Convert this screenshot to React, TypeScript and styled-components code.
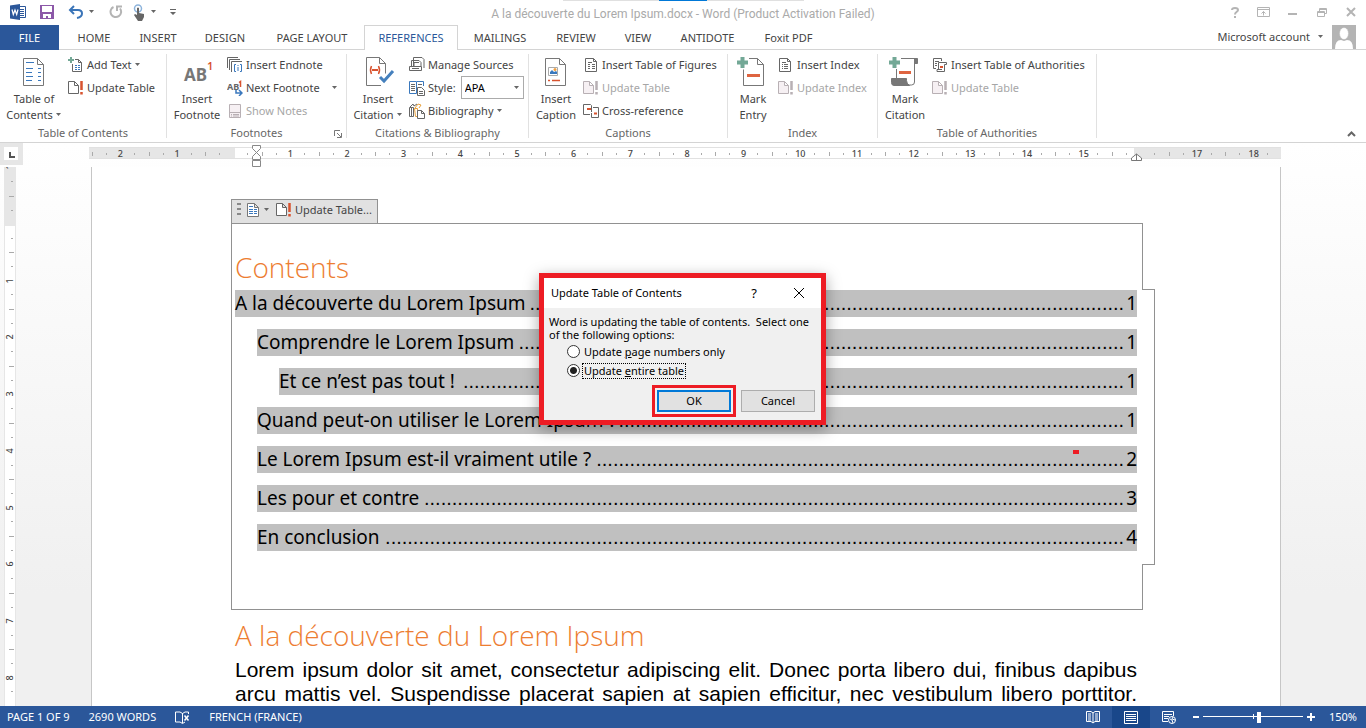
import React, { useState } from 'react';
import styled, { createGlobalStyle, css } from 'styled-components';

const blue = '#2b579a';
const ui = '"Noto Sans", "Open Sans", sans-serif';

const Global = createGlobalStyle`
  * { box-sizing: border-box; }
  body { margin: 0; background: #fff; color: #444; font: 11px/16px ${ui}; }
  button, select, input { font: inherit; color: inherit; margin: 0; }
  button { background: none; border: 0; padding: 0; cursor: pointer; }
  svg { display: block; flex: none; }
`;

const App_ = styled.div`
  height: 100vh;
  display: flex;
  flex-direction: column;
  overflow: hidden;
  position: relative;
`;

/* ---------- title bar ---------- */
const TitleBar = styled.header`
  height: 25px;
  flex: none;
  display: grid;
  grid-template-columns: 1fr auto 1fr;
  align-items: center;
  padding: 0 8px 2px;
`;
const QuickAccess = styled.div`
  display: flex;
  align-items: center;
`;
const QuickButton = styled.button<{ $w: number }>`
  width: ${(p) => p.$w}px;
  height: 20px;
  display: flex;
  align-items: center;
  justify-content: center;
`;
const DocTitle = styled.h1`
  margin: 0;
  padding-top: 4px;
  font: 12px/20px Roboto, sans-serif;
  color: #aaa;
`;
const WindowButtons = styled.div`
  display: flex;
  justify-content: flex-end;
  margin-right: -7px;
`;
const WindowButton = styled.button`
  width: 29px;
  height: 20px;
  display: flex;
  align-items: center;
  justify-content: center;
  color: #b4b4b4;
`;
const TopStrip = styled.div`
  position: absolute;
  top: 0;
  left: 50%;
  margin-left: -120px;
  width: 241px;
  height: 1px;
  background: linear-gradient(90deg, #e0e0e0 96px, #0078d7 96px 144px, #e0e0e0 144px);
`;

/* ---------- tabs ---------- */
const TabRow = styled.nav`
  height: 25px;
  flex: none;
  display: flex;
  border-bottom: 1px solid #d4d4d4;
`;
const Tab = styled.button<{ $w: number; $kind?: 'file' | 'active' }>`
  width: ${(p) => p.$w}px;
  height: 25px;
  white-space: nowrap;
  ${(p) => p.$kind === 'file' && css`background: ${blue}; color: #fff; margin-right: 3px;`}
  ${(p) =>
    p.$kind === 'active' &&
    css`
      background: #fff;
      color: ${blue};
      border: 1px solid #d4d4d4;
      border-bottom: 0;
    `}
`;
const Account = styled.button`
  margin-left: auto;
  margin-right: 10px;
  height: 24px;
  display: flex;
  align-items: center;
  gap: 8px;
`;

/* ---------- ribbon ---------- */
const Ribbon = styled.section`
  height: 93px;
  flex: none;
  display: flex;
  padding-top: 4px;
  border-bottom: 1px solid #d4d4d4;
  position: relative;
`;
const GroupBox = styled.div<{ $w: number }>`
  width: ${(p) => p.$w}px;
  height: 84px;
  flex: none;
  border-right: 1px solid #e1e1e1;
  padding-left: 4px;
  display: flex;
  flex-direction: column;
  position: relative;
`;
const GroupBody = styled.div`
  height: 71px;
  flex: none;
  display: flex;
  gap: 4px;
`;
const GroupLabel = styled.div`
  flex: none;
  text-align: center;
  padding-right: 4px;
  color: #666;
`;
const Big = styled.button<{ $w: number }>`
  width: ${(p) => p.$w}px;
  padding-top: 3px;
  display: flex;
  flex-direction: column;
  align-items: center;
  gap: 4px;
  white-space: nowrap;
`;
const Items = styled.div`
  display: flex;
  flex-direction: column;
  margin-top: -1px;
`;
const itemCss = css`
  height: 23px;
  display: flex;
  align-items: center;
  gap: 3px;
  white-space: nowrap;
`;
const Item = styled.button<{ $off?: boolean }>`
  ${itemCss}
  color: ${(p) => (p.$off ? '#a6a6a6' : '#444')};
`;
const StyleField = styled.label`
  ${itemCss}
`;
const SelectWrap = styled.span`
  margin-left: 2px;
  display: inline-grid;
  align-items: center;
  & > * { grid-area: 1 / 1; }
  & > svg { justify-self: end; margin-right: 4px; pointer-events: none; }
`;
const Select = styled.select`
  appearance: none;
  width: 63px;
  height: 23px;
  padding: 0 3px;
  border: 1px solid #ababab;
  border-radius: 0;
  background: #fff;
  color: #000;
`;
const Launcher = styled.button`
  position: absolute;
  right: 4px;
  bottom: 0;
`;
const Collapse = styled.button`
  margin-left: auto;
  align-self: flex-end;
  padding: 4px 10px 5px 4px;
`;

const Caret = ({ gap = false }: { gap?: boolean }) => (
  <svg width={gap ? 15 : 6} height="4" viewBox={gap ? '-9 0 15 4' : '0 0 6 4'}>
    <path d="M0 0h5L2.500 3z" fill="#666" />
  </svg>
);
const CaretLine = styled.span`
  display: flex;
  align-items: center;
  gap: 3px;
`;
const TwoLines = styled.span`
  display: flex;
  flex-direction: column;
  align-items: center;
  line-height: 16px;
`;

/* ---------- workspace ---------- */
const Work = styled.main`
  flex: 1;
  min-height: 0;
  display: grid;
  grid-template: 24px 1fr / 22px 1fr;
  padding-right: 16px;
  background: linear-gradient(#fff, #f0f0f0 80%);
  overflow: hidden;
`;
const Corner = styled.div`
  width: 23px;
  height: 22px;
  background: #e6e6e6;
  padding: 4px 5px 5px 4px;
  & > svg { background: #fff; }
`;
const RulerLane = styled.div`
  display: flex;
  justify-content: center;
  padding-top: 4px;
`;
const HRuler = styled.div`
  width: 1192px;
  height: 12px;
  flex: none;
  margin-left: -2px;
  padding-left: 2px;
  display: grid;
  grid-template-columns: repeat(21, 1fr);
  background: linear-gradient(90deg, #e6e6e6 146px, #fff 146px 1045px, #e6e6e6 1045px);
  border: solid #e1e1e1;
  border-width: 1px 0;
  position: relative;
`;
const Cell = styled.span`
  padding-left: 2px;
  text-align: center;
  font-size: 9px;
  font-weight: 500;
  line-height: 12px;
  color: #444;
  background:
    linear-gradient(#aaa, #aaa) 1px 4px / 1px 4px no-repeat,
    linear-gradient(#aaa, #aaa) 15px 5px / 1px 2px no-repeat,
    linear-gradient(#aaa, #aaa) 43px 5px / 1px 2px no-repeat;
`;
const IndentMark = styled.svg`
  position: absolute;
  left: 163px;
  top: -3px;
`;
const RightMark = styled.svg`
  position: absolute;
  right: 139px;
  top: 5px;
`;
const VRuler = styled.div`
  width: 12px;
  margin-left: 4px;
  overflow: hidden;
  background: linear-gradient(#e6e6e6 59px, #fff 59px);
  border: solid #e6e6e6;
  border-width: 0 1px;
`;
const VCells = styled.div`
  height: 567px;
  margin-top: -28px;
  display: grid;
  grid-template-rows: repeat(10, 1fr);
`;
const VCell = styled.span`
  display: flex;
  align-items: center;
  justify-content: center;
  font-size: 9px;
  font-weight: 500;
  color: #444;
  background:
    linear-gradient(#aaa, #aaa) 4px 0 / 5px 1px no-repeat,
    linear-gradient(#aaa, #aaa) 6px 14px / 2px 1px no-repeat,
    linear-gradient(#aaa, #aaa) 6px 42px / 2px 1px no-repeat;
  & > b { font-weight: 500; transform: rotate(-90deg); }
`;
const Canvas = styled.div`
  display: flex;
  justify-content: center;
`;
const Page = styled.article`
  width: 1190px;
  flex: none;
  padding: 32px 137px 0 139px;
  background: #fff;
  border: solid #c6c6c6;
  border-width: 0 1px;
  color: #000;
`;
const FieldBar = styled.div`
  width: 147px;
  height: 24px;
  padding: 0 5px;
  display: flex;
  align-items: center;
  background: #e1e1e1;
  border: 1px solid #919191;
  border-bottom: 0;
  color: #444;
`;
const Grip = styled.svg`
  align-self: flex-start;
  margin-top: 3px;
`;
const FieldButton = styled.button<{ $gap: number }>`
  display: flex;
  align-items: center;
  gap: ${(p) => p.$gap}px;
  white-space: nowrap;
  margin-left: 6px;
  padding-bottom: 3px;
`;
const frame = '1px solid #919191';
const TocTop = styled.div`
  display: flow-root;
  border: ${frame};
  border-bottom: 0;
  padding: 24px 3px 0;
`;
const TocMiddle = styled.div`
  position: relative;
  margin-right: -12px;
  padding: 0 17px 14px 3px;
  border: ${frame};
  border-width: 0 1px;
  display: flex;
  flex-direction: column;
  gap: 12px;
  &::before, &::after {
    content: '';
    position: absolute;
    right: -1px;
    width: 13px;
    border-top: ${frame};
  }
  &::before { top: -1px; }
  &::after { bottom: 0; }
`;
const TocBottom = styled.div`
  height: 45px;
  border: ${frame};
  border-top: 0;
`;
const Heading = styled.h2`
  margin: 0 0 4px;
  font: 350 28px/38px "Open Sans", sans-serif;
  color: #ed7d31;
`;
const TocRow = styled.a<{ $level: number }>`
  position: relative;
  height: 27px;
  margin-left: ${(p) => p.$level * 22}px;
  background: #c0c0c0;
  color: #000;
  text-decoration: none;
  font: 19px/27px "Noto Sans", sans-serif;
  display: flex;
  white-space: nowrap;
`;
const Leader = styled.span`
  margin: 0 2px 0 auto;
  font: 20px/27px "Liberation Sans", sans-serif;
`;
const RedMark = styled.i`
  position: absolute;
  top: 4px;
  right: 58px;
  width: 6px;
  height: 4px;
  background: #ed1c24;
`;
const Body = styled.section`
  padding: 6px 6px 0 4px;
`;
const Line = styled.p`
  margin: 0;
  font: 21px/24px "Liberation Sans", Arial, sans-serif;
  text-align: justify;
  text-align-last: justify;
`;

/* ---------- dialog ---------- */
const Dialog = styled.form`
  position: absolute;
  top: 273px;
  left: 50%;
  margin-left: -144px;
  width: 287px;
  border: 5px solid #ed1c24;
  background: #f0f0f0;
  color: #000;
  box-shadow: 0 4px 14px rgba(0, 0, 0, 0.35);
`;
const DialogHead = styled.div`
  height: 30px;
  padding: 0 16px 0 7px;
  display: flex;
  align-items: center;
  background: #fff;
  & > span { flex: 1; }
  & > button { width: 12px; margin-left: 33px; display: flex; justify-content: center; font-size: 13px; }
`;
const DialogBody = styled.div`
  padding: 7px 6px 8px 5px;
`;
const Message = styled.p`
  margin: 0 0 1px;
  line-height: 13px;
  white-space: pre;
`;
const Option = styled.label`
  height: 19px;
  padding-left: 18px;
  display: flex;
  align-items: center;
  gap: 2px;
`;
const Radio = styled.input`
  appearance: none;
  width: 13px;
  height: 13px;
  border: 1px solid #333;
  border-radius: 50%;
  background: #fff;
  &:checked { background: radial-gradient(circle, #222 3px, #fff 4px); }
`;
const OptionText = styled.span<{ $focus: boolean }>`
  height: 16px;
  line-height: 14px;
  padding: 0 1px;
  border: 1px dotted ${(p) => (p.$focus ? '#000' : 'transparent')};
`;
const Actions = styled.div`
  display: flex;
  justify-content: flex-end;
  gap: 10px;
  margin-top: 10px;
`;
const ActionButton = styled.button<{ $primary?: boolean }>`
  width: 74px;
  height: 22px;
  background: #e1e1e1;
  border: 1px solid #adadad;
  ${(p) =>
    p.$primary &&
    css`
      border: 2px solid #0078d7;
      outline: 3px solid #ed1c24;
      outline-offset: 2px;
    `}
`;

/* ---------- status bar ---------- */
const StatusBar = styled.footer`
  height: 22px;
  flex: none;
  display: flex;
  align-items: center;
  padding: 0 9px 0 7px;
  gap: 19px;
  background: ${blue};
  color: #fff;
`;
const StatusRight = styled.div`
  margin-left: auto;
  display: flex;
  align-items: center;
`;
const Views = styled.div`
  display: flex;
  margin-right: 3px;
`;
const ViewButton = styled.button<{ $on?: boolean }>`
  width: 38px;
  height: 22px;
  display: flex;
  align-items: center;
  justify-content: center;
  background: ${(p) => (p.$on ? '#19478a' : 'none')};
`;
const ZoomStep = styled.button`
  width: 8px;
  height: 16px;
  display: flex;
  align-items: center;
  justify-content: flex-end;
`;
const ZoomSlider = styled.input`
  appearance: none;
  width: 100px;
  height: 12px;
  margin: 0 4px;
  background:
    linear-gradient(#fff, #fff) 0 5px / 100% 1px no-repeat,
    linear-gradient(#fff, #fff) 50px 3px / 1px 5px no-repeat;
  &::-webkit-slider-thumb { appearance: none; width: 4px; height: 11px; background: #fff; }
`;
const ZoomValue = styled.span`
  width: 42px;
  text-align: right;
`;

/* ---------- icons ---------- */
const Big32 = ({ children }: { children: React.ReactNode }) => (
  <svg width="34" height="30" viewBox="0 0 34 30" fill="none" stroke="#777">{children}</svg>
);
const Small = ({ children, off }: { children: React.ReactNode; off?: boolean }) => (
  <svg width="16" height="16" viewBox="0 0 16 16" fill="none" stroke={off ? '#b8b0b4' : '#666'}>{children}</svg>
);
const bigDoc = 'M6.500 1.500h14l6 6v21h-20zM20.500 1.500v6h6';

const TocIcon = () => (
  <Big32>
    <path d={bigDoc} />
    <path stroke="#3a78bd" d="M9 5.500h8M9 11.500h7M9 15.500h6M9 19.500h7M9 23.500h6M21 11.500h3M21 15.500h3M21 19.500h3M21 23.500h3" />
  </Big32>
);
const FootnoteIcon = () => (
  <svg width="34" height="30" viewBox="0 0 34 30">
    <text x="4" y="24" fontFamily="Noto Sans" fontWeight="700" fontSize="17" fill="#777">AB</text>
    <text x="27" y="13" fontFamily="Noto Sans" fontWeight="600" fontSize="11" fill="#d8532f">1</text>
  </svg>
);
const CitationIcon = () => (
  <Big32>
    <path d="M20 28.500H5.500v-28h13l6 6v10M18.500 .5v6h6" />
    <path stroke="#d8532f" strokeWidth="1.500" d="M10.500 9q-2 4 0 8M17.500 9q2 4 0 8" />
    <path stroke="#d8532f" strokeWidth="2" d="M11 13h6" />
    <path stroke="#4580bd" strokeWidth="3" d="M19 20l4 4 9-10" />
  </Big32>
);
const CaptionIcon = () => (
  <Big32>
    <path d={bigDoc} />
    <path stroke="#aaa" d="M9.500 10.500h9v8h-9z" />
    <path fill="#3a78bd" stroke="none" d="M11 17v-2l2-2 2 2 2-1 1 1v2z" />
    <circle cx="16" cy="12.500" r="1.500" fill="#f0a040" stroke="none" />
    <path stroke="#d8532f" strokeWidth="1.500" d="M9 23.500h2M13 23.500h8" />
  </Big32>
);
const plus = 'M0 5.500h11M5.500 0v11';
const MarkEntryIcon = () => (
  <Big32>
    <path d="M7.500 12.500v16h20v-21l-6-6H13M21.500 1.500v6h6" />
    <path stroke="#73a896" strokeWidth="4" d={plus} transform="translate(1)" />
    <path stroke="#de6440" strokeWidth="3" d="M11 18.500h13" />
  </Big32>
);
const MarkCitationIcon = () => (
  <Big32>
    <path d="M8.500 12v10M13 1.500h15.500M26.500 2v23q0 3-3 3H8" />
    <path fill="#777" d="M3.500 21.500h15v2q0 3 3 5H6q-2.500 0-2.500-3zM26.500 1.500h3v5h-3z" />
    <path stroke="#73a896" strokeWidth="4" d={plus} transform="translate(1)" />
    <path stroke="#de6440" strokeWidth="3" d="M11 15.500h12" />
  </Big32>
);

const AddTextIcon = () => (
  <Small>
    <path d="M4.500 7v7.500h9v-9l-3-3H7M10.500 2.500v3h3" />
    <path stroke="#73a896" strokeWidth="2" d="M0 3h6M3 0v6" />
    <path stroke="#3a78bd" d="M7 8.500h2M10 8.500h2M7 10.500h2M10 10.500h2M7 12.500h2M10 12.500h2" />
  </Small>
);
const UpdateIcon = ({ off }: { off?: boolean }) => (
  <Small off={off}>
    <path fill={off ? '#f6f0f3' : '#fff'} d="M.5 1.500h6l4 4v8H.5zM6.500 1.500v4h4" />
    <path stroke={off ? '#b8b0b4' : '#d8532f'} strokeWidth="2.500" d="M13.500 1v9M13.500 12v2.500" />
  </Small>
);
const EndnoteIcon = () => (
  <Small>
    <path d="M.5 11V.5H11M2.500 13V2.500H13M4.500 15V4.500H15" />
    <path stroke="#3a78bd" d="M9 7.500H7.500v7H9M13 7.500h1.500v7H13M11 10v4M11 8v1" />
  </Small>
);
const NextFootnoteIcon = () => (
  <svg width="16" height="16" viewBox="0 0 16 16">
    <text x="0" y="10" fontFamily="Noto Sans" fontWeight="700" fontSize="9" fill="#666">AB</text>
    <path d="M12 2.500l1.500-1V7" fill="none" stroke="#d8532f" strokeWidth="1.500" />
    <path d="M9 10v3h5M12 10l3 3-3 3" fill="none" stroke="#3a78bd" strokeWidth="1.500" />
  </svg>
);
const ShowNotesIcon = () => (
  <Small off>
    <path fill="#f6f0f3" d="M2.500 1.500h11v13h-11z" />
    <path d="M2 9.500h12M4 11.500h1M6 11.500h6M4 13h1M6 13h6" />
  </Small>
);
const ManageIcon = () => (
  <Small>
    <path fill="#fff" d="M4.500 9V.5H13l2 2V11M2.500 9V3.500H10l2 2V9" />
    <path d="M5 9.500v-4h5M.5 9.500h12v4H.5zM3 11.500h7" />
  </Small>
);
const StyleIcon = () => (
  <Small>
    <path stroke="#3a78bd" d="M.5 1.500h7v12h-7zM8 1.500h6.500V6" />
    <path d="M2 4.500h4M2 6.500h4M2 8.500h4M2 10.500h4M9 4.500h4" />
    <path fill="#fff" d="M8.500 7.500h4l3 3v5h-7zM10 11.500h4M10 13.500h4" />
  </Small>
);
const BiblioIcon = () => (
  <Small>
    <path d="M.5 4.500h2v9h-2zM2.500 4.500h2v9h-2zM1 4l3-3 1 2 3-2" />
    <path stroke="#e9a13b" d="M5.500 5.500h3v8h-2zM6 5l3-4 3 1-2 3" />
    <path fill="#fff" d="M8.500 7.500h4l3 3v5h-7zM12.500 7.500v3h3" />
  </Small>
);
const FiguresIcon = () => (
  <Small>
    <path d="M2.500 1.500h8l3 3v10h-11zM10.500 1.500v3h3M5 5.500h4M5 7.500h2M5 9.500h2M5 11.500h2M9 7.500h3M9 9.500h3M9 11.500h3" />
  </Small>
);
const CrossRefIcon = () => (
  <Small>
    <path d="M7 11.500H.5V1.500h7l1 1V9M10 4.500h5.500v10h-7V10" />
    <path stroke="#d8532f" strokeWidth="2" d="M4 6h4M11 10.500h3" />
  </Small>
);
const IndexIcon = () => (
  <Small>
    <path d="M1.500 1.500h8l3 3v10h-11zM9.500 1.500v3h3M4 5.500h4M4 7.500h1M4 9.500h1M4 11.500h1M6 7.500h4M6 9.500h4M6 11.500h4" />
  </Small>
);
const AuthoritiesIcon = () => (
  <Small>
    <path d="M4 11.500H1.500V1.500h8V4M3 4.500h4M3 6.500h2M3 8.500h2" />
    <path fill="#fff" d="M6.500 13V5.500h8v2h-2v7H5v-2h5" />
    <path stroke="#d8532f" strokeWidth="2" d="M8 10h3" />
  </Small>
);

type Ent = { label: string; icon: React.ReactNode; off?: boolean; caret?: 'near' | 'far' };
const Entries = ({ list }: { list: Ent[] }) => (
  <>
    {list.map((e) => (
      <Item key={e.label} $off={e.off}>
        {e.icon}
        <CaretLine>
          {e.label}
          {e.caret && <Caret gap={e.caret === 'far'} />}
        </CaretLine>
      </Item>
    ))}
  </>
);
const BigButton = ({ w, icon, lines, caret }: { w: number; icon: React.ReactNode; lines: [string, string]; caret?: boolean }) => (
  <Big $w={w}>
    {icon}
    <TwoLines>
      <span>{lines[0]}</span>
      <CaretLine>
        {lines[1]}
        {caret && <Caret />}
      </CaretLine>
    </TwoLines>
  </Big>
);

const tabs: [string, number, ('file' | 'active')?][] = [
  ['FILE', 59, 'file'], ['HOME', 64], ['INSERT', 64], ['DESIGN', 70], ['PAGE LAYOUT', 104],
  ['REFERENCES', 94, 'active'], ['MAILINGS', 84], ['REVIEW', 68], ['VIEW', 56], ['ANTIDOTE', 83], ['Foxit PDF', 79],
];
const hNums = ['2', '1', '', ...Array.from({ length: 15 }, (_, i) => String(i + 1)), '', '17', '18'];
const vNums = ['1', '', '1', '2', '3', '4', '5', '6', '7', '8'];
const toc: { text: string; page: number; level: number; dots: number }[] = [
  { text: 'A la découverte du Lorem Ipsum', page: 1, level: 0, dots: 107 },
  { text: 'Comprendre le Lorem Ipsum', page: 1, level: 1, dots: 109 },
  { text: 'Et ce n’est pas tout !', page: 1, level: 2, dots: 119 },
  { text: 'Quand peut-on utiliser le Lorem Ipsum ?', page: 1, level: 1, dots: 91 },
  { text: 'Le Lorem Ipsum est-il vraiment utile ?', page: 2, level: 1, dots: 95 },
  { text: 'Les pour et contre', page: 3, level: 1, dots: 126 },
  { text: 'En conclusion', page: 4, level: 1, dots: 133 },
];

export default function App() {
  const [choice, setChoice] = useState('table');
  return (
    <App_>
      <Global />
      <TopStrip />
      <TitleBar>
        <QuickAccess>
          <QuickButton $w={20} aria-label="Word">
            <svg width="16" height="16" viewBox="0 0 16 16">
              <path d="M9 2.500h6.500v11H9" fill="#fff" stroke={blue} />
              <path d="M10 5.500h4M10 7.500h4M10 9.500h4M10 11.500h4" stroke={blue} />
              <path d="M0 1.500L10 0v16L0 14.500z" fill={blue} />
              <path d="M2 5.500l1.300 5L5 6l1.700 4.500L8 5.500" fill="none" stroke="#fff" strokeWidth="1.200" />
            </svg>
          </QuickButton>
          <QuickButton $w={38} aria-label="Save">
            <svg width="14" height="14" viewBox="0 0 14 14">
              <path d="M0 0h14v14H0z" fill="#8c58a8" />
              <path d="M2 1h10v6H2zM3 9h8v4H8v-2H6v2H3z" fill="#fff" />
            </svg>
          </QuickButton>
          <QuickButton $w={20} aria-label="Undo">
            <svg width="16" height="14" viewBox="0 0 16 14" fill="none" stroke="#3a74b8" strokeWidth="2">
              <path d="M6 1L2 5l4 4M2.500 5H10q4 0 4 3.500T9 13" />
            </svg>
          </QuickButton>
          <QuickButton $w={12} aria-label="Undo list"><Caret /></QuickButton>
          <QuickButton $w={36} aria-label="Repeat">
            <svg width="14" height="14" viewBox="0 0 14 14" fill="none" stroke="#b4b4b4" strokeWidth="2">
              <path d="M4.500 2A5.300 5.300 0 1 0 11 3.500M8 6V1.500h5" />
            </svg>
          </QuickButton>
          <QuickButton $w={10} aria-label="Touch mode">
            <svg width="12" height="17" viewBox="0 0 12 17">
              <circle cx="5" cy="4.500" r="3.500" fill="none" stroke="#8db4dc" strokeWidth="1.500" />
              <path d="M4 4q1-1 2 0v5l5 1v3l-2 4H5L1 11l1-1 2 1z" fill="#666" />
            </svg>
          </QuickButton>
          <QuickButton $w={20} aria-label="Touch mode list"><Caret /></QuickButton>
          <QuickButton $w={18} aria-label="Customize">
            <svg width="6" height="7" viewBox="0 0 6 7"><path d="M0 0h6v1H0zM0 3h6L3 6z" fill="#666" /></svg>
          </QuickButton>
        </QuickAccess>
        <DocTitle>A la découverte du Lorem Ipsum.docx - Word (Product Activation Failed)</DocTitle>
        <WindowButtons>
          <WindowButton aria-label="Help">
            <svg width="8" height="11" viewBox="0 0 8 11" fill="none" stroke="currentColor" strokeWidth="2">
              <path d="M1 3q0-2 3-2t3 2q0 1-1.500 2T4 7.500M4 9v2" />
            </svg>
          </WindowButton>
          <WindowButton aria-label="Ribbon display options">
            <svg width="13" height="10" viewBox="0 0 13 10" fill="none" stroke="currentColor">
              <path d="M.5 .5h12v9H.5zM.5 2.500h12M6.500 8.500v-4M4.500 6.500l2-2 2 2" />
            </svg>
          </WindowButton>
          <WindowButton aria-label="Minimize">
            <svg width="9" height="6" viewBox="0 0 9 6"><path d="M0 4h9v2H0z" fill="currentColor" /></svg>
          </WindowButton>
          <WindowButton aria-label="Restore">
            <svg width="10" height="9" viewBox="0 0 10 9" fill="none" stroke="currentColor">
              <path d="M.5 3.500h7v5h-7zM.5 4.500h7M2.500 3V.5h7v5H8M2.500 1.500h7" />
            </svg>
          </WindowButton>
          <WindowButton aria-label="Close">
            <svg width="10" height="10" viewBox="0 0 10 10" stroke="currentColor" strokeWidth="2"><path d="M1 1l8 8M9 1L1 9" /></svg>
          </WindowButton>
        </WindowButtons>
      </TitleBar>

      <TabRow>
        {tabs.map(([name, w, kind]) => <Tab key={name} $w={w} $kind={kind}>{name}</Tab>)}
        <Account>
          Microsoft account <Caret />
          <svg width="24" height="24" viewBox="0 0 24 24">
            <path d="M0 0h24v24H0z" fill="#b4b4b4" />
            <path d="M3 24q0-9 6-9l3 1 3-1q6 0 6 9z" fill="#fff" />
            <ellipse cx="12" cy="8.500" rx="4.500" ry="6" fill="#fff" stroke="#b4b4b4" strokeWidth=".5" />
          </svg>
        </Account>
      </TabRow>

      <Ribbon>
        <GroupBox $w={167}>
          <GroupBody>
            <BigButton w={60} icon={<TocIcon />} lines={['Table of', 'Contents']} caret />
            <Items><Entries list={[
              { label: 'Add Text', icon: <AddTextIcon />, caret: 'near' },
              { label: 'Update Table', icon: <UpdateIcon /> },
            ]} /></Items>
          </GroupBody>
          <GroupLabel>Table of Contents</GroupLabel>
        </GroupBox>
        <GroupBox $w={180}>
          <GroupBody>
            <BigButton w={52} icon={<FootnoteIcon />} lines={['Insert', 'Footnote']} />
            <Items><Entries list={[
              { label: 'Insert Endnote', icon: <EndnoteIcon /> },
              { label: 'Next Footnote', icon: <NextFootnoteIcon />, caret: 'far' },
              { label: 'Show Notes', icon: <ShowNotesIcon />, off: true },
            ]} /></Items>
          </GroupBody>
          <GroupLabel>Footnotes</GroupLabel>
          <Launcher aria-label="Footnote options">
            <svg width="8" height="8" viewBox="0 0 8 8" fill="none" stroke="#777"><path d="M.5 6V.5H6M3 3l4 4M7.500 3v4.500H3" /></svg>
          </Launcher>
        </GroupBox>
        <GroupBox $w={182}>
          <GroupBody>
            <BigButton w={54} icon={<CitationIcon />} lines={['Insert', 'Citation']} caret />
            <Items>
              <Entries list={[{ label: 'Manage Sources', icon: <ManageIcon /> }]} />
              <StyleField>
                <StyleIcon />
                Style:
                <SelectWrap>
                  <Select defaultValue="APA"><option>APA</option></Select>
                  <Caret />
                </SelectWrap>
              </StyleField>
              <Entries list={[{ label: 'Bibliography', icon: <BiblioIcon />, caret: 'near' }]} />
            </Items>
          </GroupBody>
          <GroupLabel>Citations &amp; Bibliography</GroupLabel>
        </GroupBox>
        <GroupBox $w={199}>
          <GroupBody>
            <BigButton w={46} icon={<CaptionIcon />} lines={['Insert', 'Caption']} />
            <Items><Entries list={[
              { label: 'Insert Table of Figures', icon: <FiguresIcon /> },
              { label: 'Update Table', icon: <UpdateIcon off />, off: true },
              { label: 'Cross-reference', icon: <CrossRefIcon /> },
            ]} /></Items>
          </GroupBody>
          <GroupLabel>Captions</GroupLabel>
        </GroupBox>
        <GroupBox $w={150}>
          <GroupBody>
            <BigButton w={42} icon={<MarkEntryIcon />} lines={['Mark', 'Entry']} />
            <Items><Entries list={[
              { label: 'Insert Index', icon: <IndexIcon /> },
              { label: 'Update Index', icon: <UpdateIcon off />, off: true },
            ]} /></Items>
          </GroupBody>
          <GroupLabel>Index</GroupLabel>
        </GroupBox>
        <GroupBox $w={219}>
          <GroupBody>
            <BigButton w={46} icon={<MarkCitationIcon />} lines={['Mark', 'Citation']} />
            <Items><Entries list={[
              { label: 'Insert Table of Authorities', icon: <AuthoritiesIcon /> },
              { label: 'Update Table', icon: <UpdateIcon off />, off: true },
            ]} /></Items>
          </GroupBody>
          <GroupLabel>Table of Authorities</GroupLabel>
        </GroupBox>
        <Collapse aria-label="Collapse ribbon">
          <svg width="9" height="6" viewBox="0 0 9 6" fill="none" stroke="#666" strokeWidth="2"><path d="M1 5l3.500-3.500L8 5" /></svg>
        </Collapse>
      </Ribbon>

      <Work>
        <Corner>
          <svg width="14" height="13" viewBox="0 0 14 13"><path d="M6 5v5h5" fill="none" stroke="#555" strokeWidth="2" /></svg>
        </Corner>
        <RulerLane>
          <HRuler>
            {hNums.map((n, i) => <Cell key={i}>{n}</Cell>)}
            <IndentMark width="9" height="23" viewBox="0 0 9 23" fill="#fff" stroke="#888">
              <path d="M.5 .5h8v3l-8 8v3h8v-3l-8-8zM.5 15.500h8v6h-8z" />
            </IndentMark>
            <RightMark width="11" height="8" viewBox="0 0 11 8" fill="#fff" stroke="#777">
              <path d="M5.500 1l5 4v2.500H.5V5zM5.500 1v6" />
            </RightMark>
          </HRuler>
        </RulerLane>
        <VRuler>
          <VCells>{vNums.map((n, i) => <VCell key={i}><b>{n}</b></VCell>)}</VCells>
        </VRuler>
        <Canvas>
          <Page>
            <FieldBar>
              <Grip width="4" height="12" viewBox="0 0 4 12"><path d="M0 0h4v2H0zM0 5h4v2H0zM0 10h4v2H0z" fill="#888" /></Grip>
              <FieldButton $gap={5} aria-label="Table of contents">
                <svg width="12" height="14" viewBox="0 0 12 14" fill="#fff" stroke="#777">
                  <path d="M.5 .5h7l4 4v9H.5zM7.500 .5v4h4" />
                  <path stroke="#3a78bd" d="M2 3.500h4M2 6.500h4M2 8.500h4M2 10.500h4M7 6.500h3M7 8.500h3M7 10.500h3" />
                </svg>
                <Caret />
              </FieldButton>
              <FieldButton $gap={3}><UpdateIcon /> Update Table...</FieldButton>
            </FieldBar>
            <TocTop><Heading>Contents</Heading></TocTop>
            <TocMiddle>
              {toc.map((t) => (
                <TocRow key={t.text} href="#body" $level={t.level}>
                  {t.text}
                  <Leader>{'.'.repeat(t.dots)}</Leader>
                  {t.page}
                  {t.page === 2 && <RedMark />}
                </TocRow>
              ))}
            </TocMiddle>
            <TocBottom />
            <Body id="body">
              <Heading>A la découverte du Lorem Ipsum</Heading>
              <Line>Lorem ipsum dolor sit amet, consectetur adipiscing elit. Donec porta libero dui, finibus dapibus</Line>
              <Line>arcu mattis vel. Suspendisse placerat sapien at sapien efficitur, nec vestibulum libero porttitor.</Line>
            </Body>
          </Page>
        </Canvas>
      </Work>

      <StatusBar>
        <span>PAGE 1 OF 9</span>
        <span>2690 WORDS</span>
        <svg width="15" height="13" viewBox="0 0 15 13" fill="none" stroke="#fff">
          <path d="M7.500 2.500L5 1H.5v10H5l2.500 1.500L10 11M7.500 2v10M7.500 2.500L10 1h3.500v2" />
          <path strokeWidth="1.500" d="M9.500 4.500l4 5M13.500 4.500l-4 5" />
        </svg>
        <span>FRENCH (FRANCE)</span>
        <StatusRight>
          <Views>
            <ViewButton aria-label="Read mode">
              <svg width="14" height="13" viewBox="0 0 14 13" fill="none" stroke="#fff">
                <path d="M7 2L5 .5H.5v10H5L7 12l2-1.500h4.500V.5H9zM7 2v10M2 3h3M2 5h3M2 7h3M2 9h3M9 3h3M9 5h3M9 7h3M9 9h3" />
              </svg>
            </ViewButton>
            <ViewButton $on aria-label="Print layout">
              <svg width="14" height="13" viewBox="0 0 14 13" fill="none" stroke="#fff">
                <path d="M.5 .5h13v12H.5zM2 3.500h10M2 5.500h10M2 7.500h10M2 9.500h10" />
              </svg>
            </ViewButton>
            <ViewButton aria-label="Web layout">
              <svg width="14" height="13" viewBox="0 0 14 13" fill="none" stroke="#fff">
                <path d="M6 10.500H.5V.5h11V5M2 3.500h8M2 5.500h5M2 7.500h4" />
                <circle cx="10" cy="9" r="3.500" /><path d="M8 8l2 1 1 3M11 6l-1 2 3 1" />
              </svg>
            </ViewButton>
          </Views>
          <ZoomStep aria-label="Zoom out">
            <svg width="6" height="2"><path d="M0 0h6v2H0z" fill="#fff" /></svg>
          </ZoomStep>
          <ZoomSlider type="range" min="0" max="100" defaultValue="56" aria-label="Zoom" />
          <ZoomStep aria-label="Zoom in">
            <svg width="8" height="8" viewBox="0 0 8 8"><path d="M0 3h8v2H0zM3 0h2v8H3z" fill="#fff" /></svg>
          </ZoomStep>
          <ZoomValue>150%</ZoomValue>
        </StatusRight>
      </StatusBar>

      <Dialog onSubmit={(e) => e.preventDefault()}>
        <DialogHead>
          <span>Update Table of Contents</span>
          <button type="button">?</button>
          <button type="button" aria-label="Close">
            <svg width="12" height="12" viewBox="0 0 12 12" stroke="#000"><path d="M1 1l10 10M11 1L1 11" /></svg>
          </button>
        </DialogHead>
        <DialogBody>
          <Message>{'Word is updating the table of contents.  Select one\nof the following options:'}</Message>
          <Option>
            <Radio type="radio" name="scope" checked={choice === 'pages'} onChange={() => setChoice('pages')} />
            <OptionText $focus={choice === 'pages'}>Update <u>p</u>age numbers only</OptionText>
          </Option>
          <Option>
            <Radio type="radio" name="scope" checked={choice === 'table'} onChange={() => setChoice('table')} />
            <OptionText $focus={choice === 'table'}>Update <u>e</u>ntire table</OptionText>
          </Option>
          <Actions>
            <ActionButton $primary>OK</ActionButton>
            <ActionButton type="button">Cancel</ActionButton>
          </Actions>
        </DialogBody>
      </Dialog>
    </App_>
  );
}
